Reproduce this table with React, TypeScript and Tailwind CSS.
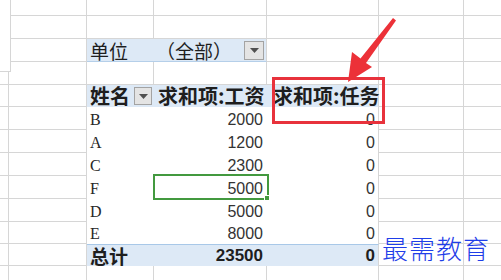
import React from "react";

const G = "border-[#d6d6d6]";
const CJK = "font-['Noto_Sans_CJK_SC',sans-serif]";
const NUM = "font-['Liberation_Sans',sans-serif]";
const SERIF = "font-['Liberation_Serif',serif]";

function Dropdown({ size }: { size: string }) {
  return (
    <div className={`flex shrink-0 items-center justify-center border border-[#a3a3a3] bg-[#e4e4e4] ${size}`}>
      <svg width="9" height="5" viewBox="0 0 9 5">
        <path d="M0 0h9L4.5 5z" fill="#505050" />
      </svg>
    </div>
  );
}

// Column A edge in the upper rows sits at x=11
function EdgeTop() {
  return <div className={`w-[11px] shrink-0 border-r ${G}`} />;
}

// Column A edge in the lower rows sits at x=9
function EdgeLow({ last = false }: { last?: boolean }) {
  return (
    <div className={`w-[11px] shrink-0 ${last ? "" : "border-b"} ${G}`}>
      <div className={`h-full w-[9px] border-r ${G}`} />
    </div>
  );
}

function RightCells({ last = false }: { last?: boolean }) {
  return (
    <>
      <div className={`w-[85px] shrink-0 border-r ${last ? "" : "border-b"} ${G}`} />
      <div className={`flex-1 ${last ? "" : "border-b"} ${G}`} />
    </>
  );
}

const rows = [
  { name: "B", pay: "2000", h: "h-[23px]" },
  { name: "A", pay: "1200", h: "h-[23px]" },
  { name: "C", pay: "2300", h: "h-[23px]" },
  { name: "F", pay: "5000", h: "h-[23px]", sel: true },
  { name: "D", pay: "5000", h: "h-[23px]" },
  { name: "E", pay: "8000", h: "h-[22px]" },
];

export default function App() {
  return (
    <div className="relative h-[280px] w-[501px] overflow-hidden bg-white text-[#1e1e1e]">
      <div className="flex flex-col">
        {/* empty upper rows */}
        {["h-[16px]", "h-[23px]"].map((h, i) => (
          <div key={i} className={`flex ${h}`}>
            <EdgeTop />
            <div className={`w-[76px] shrink-0 border-r border-b ${G}`} />
            <div className={`w-[67px] shrink-0 border-r border-b ${G}`} />
            <div className={`w-[113px] shrink-0 border-r border-b ${G}`} />
            <div className={`w-[112px] shrink-0 border-r border-b ${G}`} />
            <RightCells />
          </div>
        ))}

        {/* report filter row */}
        <div className="flex h-[23px]">
          <EdgeTop />
          <div className={`w-[76px] shrink-0 border-r border-b ${G}`} />
          <div className={`flex w-[180px] shrink-0 items-center border-r border-b border-r-[#d6d6d6] border-b-[#b5cfe9] bg-[#dde9f6] ${CJK} text-[19px] leading-none`}>
            <div className="w-[67px] shrink-0 pl-[3px]">单位</div>
            <div className="flex flex-1 items-center justify-between pr-[2px]">
              <span className="ml-[2px]">（全部）</span>
              <Dropdown size="h-[19px] w-[20px]" />
            </div>
          </div>
          <div className={`w-[112px] shrink-0 border-r border-b ${G}`} />
          <RightCells />
        </div>

        {/* spacer row, where column A steps left */}
        <div className="flex h-[23px]">
          <div className={`flex w-[11px] shrink-0 flex-col border-b ${G}`}>
            <div className={`h-[10px] border-r border-b ${G}`} />
            <div className={`w-[9px] flex-1 border-r ${G}`} />
          </div>
          <div className={`w-[76px] shrink-0 border-r border-b ${G}`} />
          <div className={`w-[67px] shrink-0 border-r border-b ${G}`} />
          <div className={`w-[113px] shrink-0 border-r border-b ${G}`} />
          <div className={`w-[112px] shrink-0 border-r border-b ${G}`} />
          <RightCells />
        </div>

        {/* pivot header */}
        <div className="flex h-[22px]">
          <EdgeLow />
          <div className={`w-[76px] shrink-0 border-r border-b ${G}`} />
          <div className={`flex w-[292px] shrink-0 items-center border-r ${G} bg-[#dde9f6] ${CJK} text-[20px] font-bold leading-none`}>
            <div className="flex w-[67px] shrink-0 items-center justify-between pl-[3px] pr-[2px]">
              <span>姓名</span>
              <Dropdown size="h-[18px] w-[18px]" />
            </div>
            <div className="w-[113px] shrink-0 whitespace-nowrap pl-[4px]">求和项:工资</div>
            <div className="flex-1 whitespace-nowrap pl-[6px]">求和项:任务</div>
          </div>
          <RightCells />
        </div>

        {/* pivot body */}
        {rows.map((r) => (
          <div key={r.name} className={`flex ${r.h}`}>
            <EdgeLow />
            <div className={`w-[76px] shrink-0 border-r border-b ${G}`} />
            <div className={`flex w-[292px] shrink-0 border-r ${G} leading-none`}>
              <div className={`flex w-[67px] shrink-0 items-end pb-[2px] pl-[3px] ${SERIF} text-[16px] text-[#262626]`}>{r.name}</div>
              <div className={`relative flex w-[113px] shrink-0 items-end justify-end pb-[2px] pr-[4px] ${NUM} text-[16px] text-[#333]`}>
                {r.pay}
                {r.sel && (
                  <div className="absolute -top-[2px] -left-px h-[26px] w-[116px] border-[2px] border-[#43993f]">
                    <div className="absolute -right-[3px] -bottom-[3px] h-[6px] w-[6px] border border-white bg-[#43993f]" />
                  </div>
                )}
              </div>
              <div className={`flex flex-1 items-end justify-end pb-[2px] pr-[3px] ${NUM} text-[16px] text-[#333]`}>0</div>
            </div>
            <RightCells />
          </div>
        ))}

        {/* grand total */}
        <div className="flex h-[22px]">
          <EdgeLow />
          <div className={`w-[76px] shrink-0 border-r border-b ${G}`} />
          <div className={`flex w-[292px] shrink-0 items-center border-t border-r border-t-[#a8c8e8] border-r-[#d6d6d6] bg-[#dde9f6] leading-none`}>
            <div className={`w-[67px] shrink-0 pl-[3px] ${CJK} text-[19px] font-bold`}>总计</div>
            <div className={`w-[113px] shrink-0 pr-[4px] text-right ${NUM} text-[17px] font-bold`}>23500</div>
            <div className={`flex-1 pr-[3px] text-right ${NUM} text-[17px] font-bold`}>0</div>
          </div>
          <RightCells />
        </div>

        {/* bottom partial row */}
        <div className="flex h-[14px]">
          <EdgeLow last />
          <div className={`w-[76px] shrink-0 border-r ${G}`} />
          <div className={`w-[67px] shrink-0 border-r ${G}`} />
          <div className={`w-[113px] shrink-0 border-r ${G}`} />
          <div className={`w-[112px] shrink-0 border-r ${G}`} />
          <RightCells last />
        </div>
      </div>

      {/* callout box */}
      <div className="pointer-events-none absolute top-[77px] left-[272px] h-[47px] w-[113px] border-[3px] border-[#e8323c]" />

      {/* callout arrow */}
      <svg className="pointer-events-none absolute top-0 left-0" width="501" height="280" viewBox="0 0 501 280">
        <polygon points="348,82 352,52 360.5,58.5 393,18 396,20.5 366,63 372,67" fill="#ec3138" />
      </svg>

      {/* watermark */}
      <div className={`pointer-events-none absolute top-[235px] left-[382px] ${CJK} text-[26px] font-light leading-none tracking-[1px] text-[#1f3ee8]`}>
        最需教育
      </div>
    </div>
  );
}
